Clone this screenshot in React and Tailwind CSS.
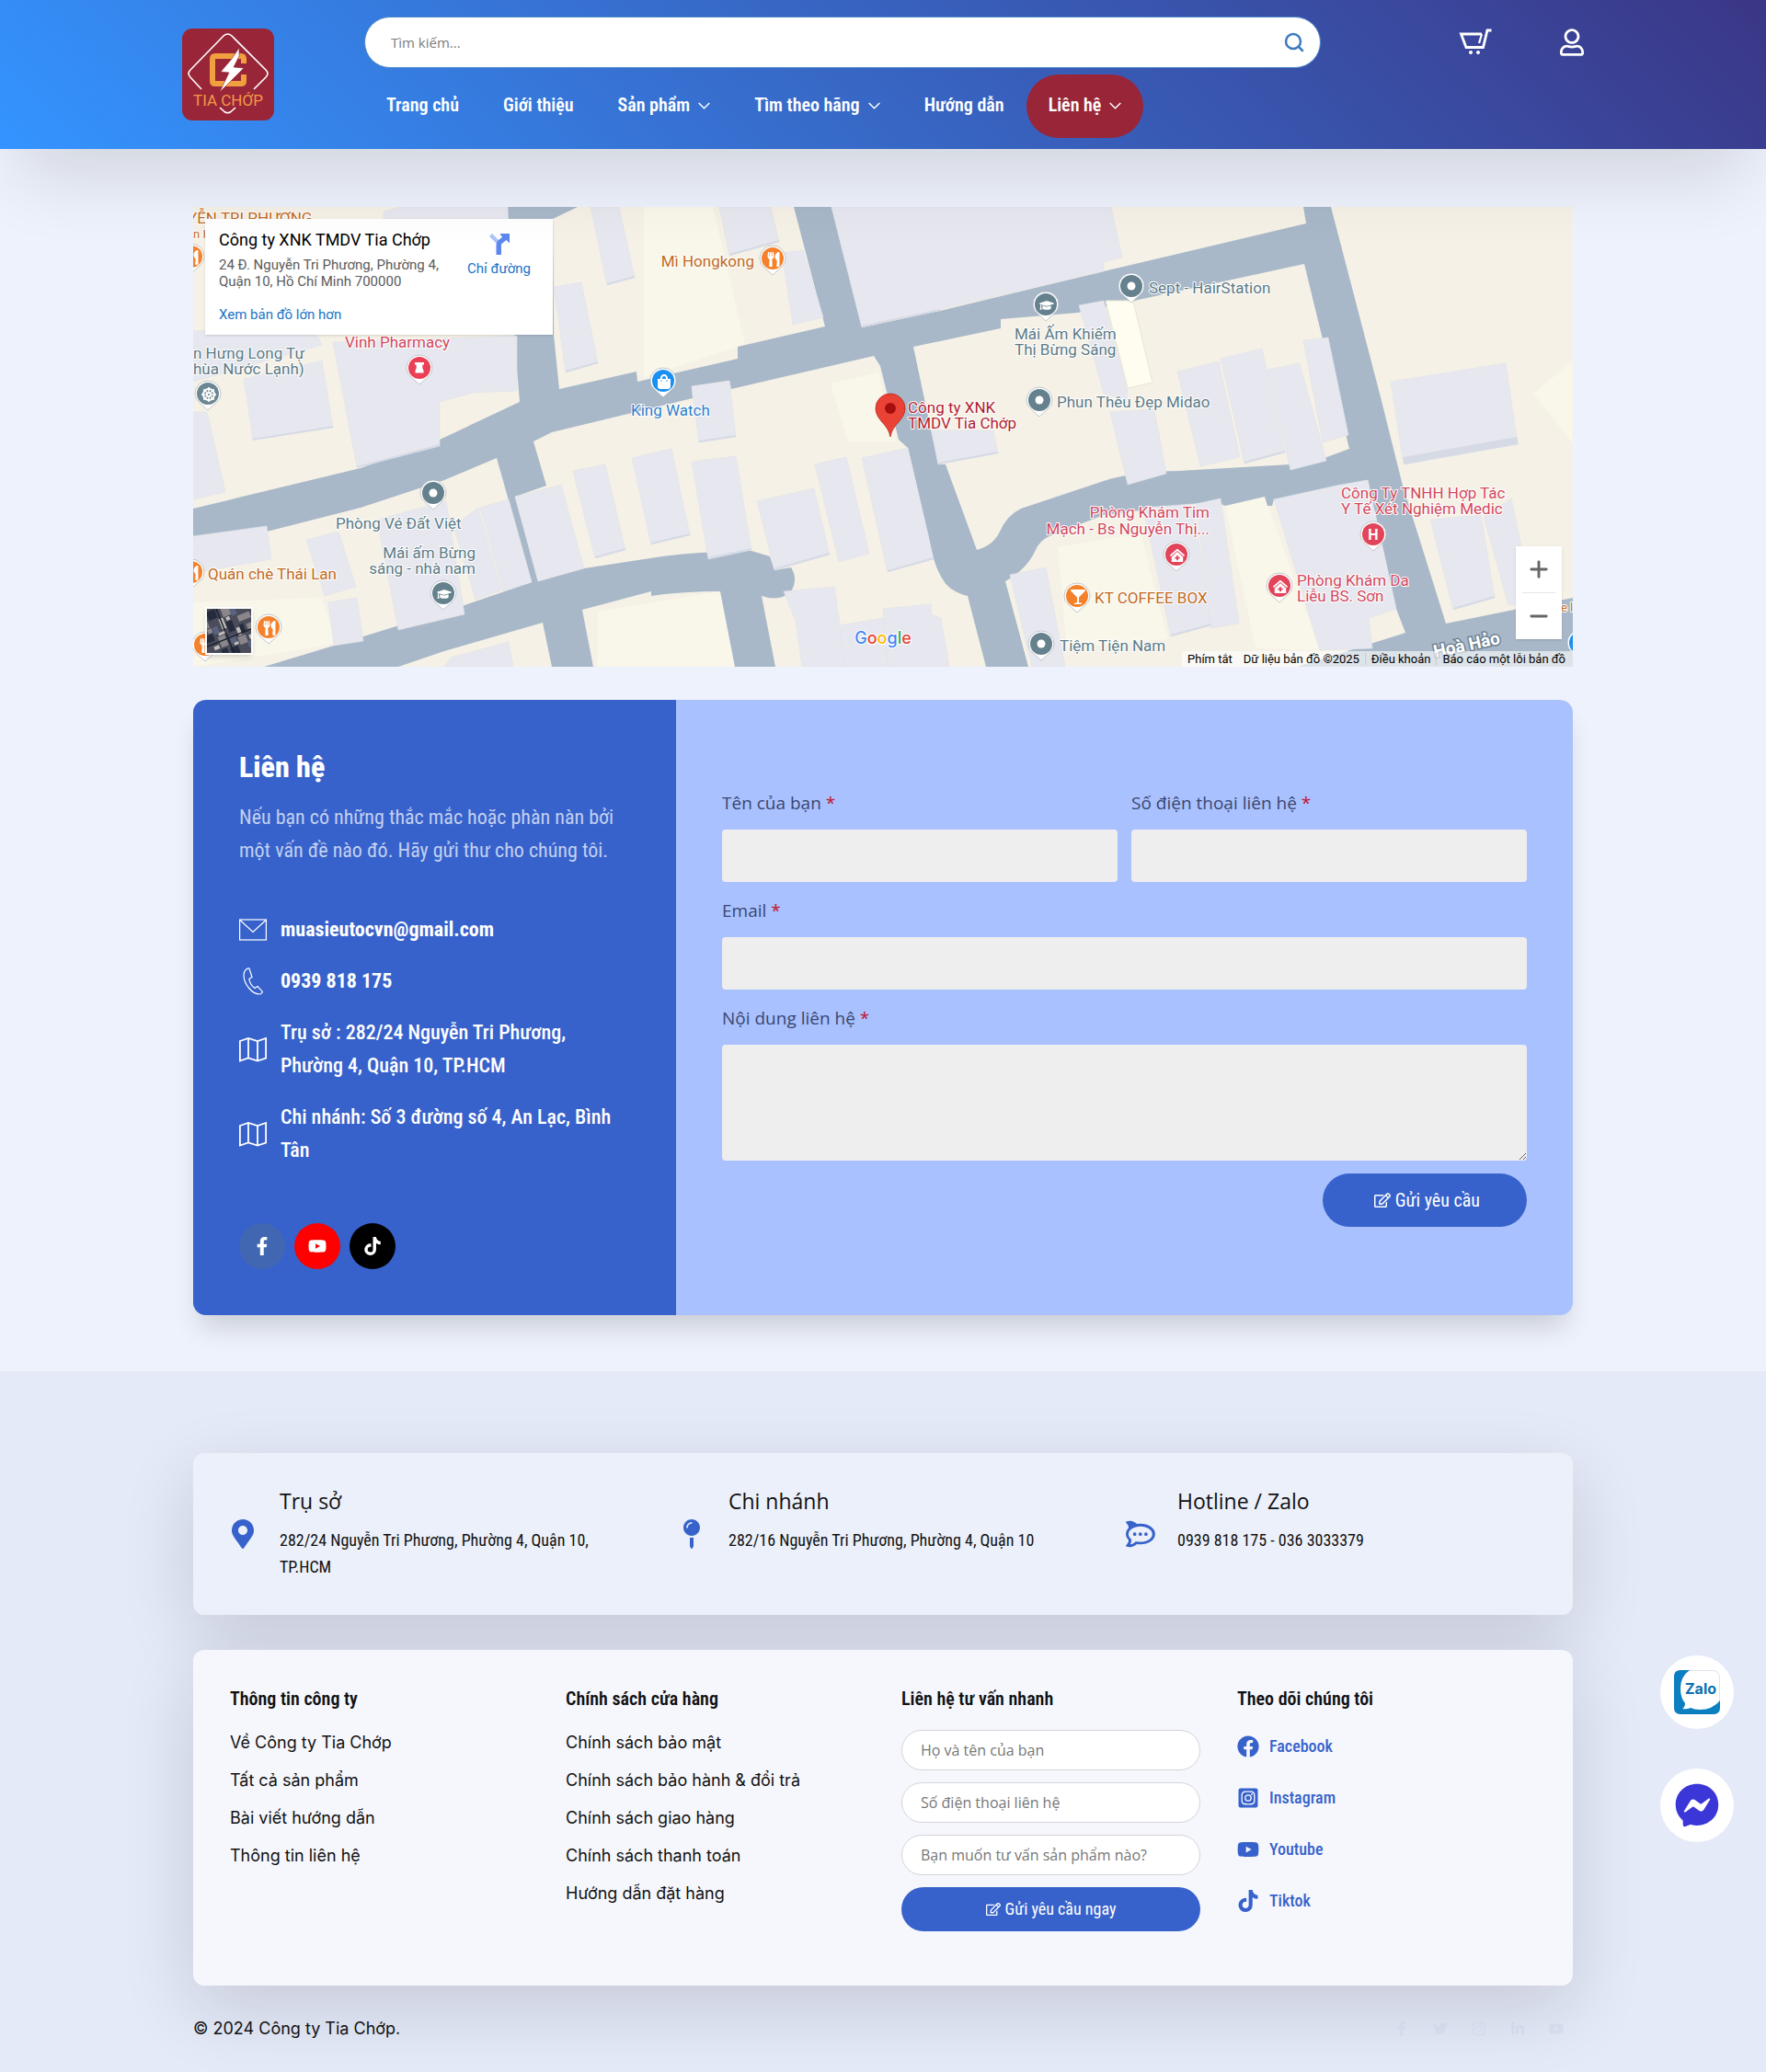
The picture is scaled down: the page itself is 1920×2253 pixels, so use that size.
import React from 'react';
import {
  FaRegUser, FaFacebookF, FaYoutube, FaTiktok, FaRegEdit, FaMapMarkerAlt, FaMapPin,
  FaRocketchat, FaFacebook, FaInstagramSquare, FaFacebookMessenger, FaTwitter,
  FaInstagram, FaLinkedinIn, FaUtensils, FaGraduationCap, FaShoppingBag, FaDharmachakra,
  FaGlassMartini, FaClinicMedical,
} from 'react-icons/fa';
import { Search, Plus, Minus } from 'lucide-react';

const navItems = [
  { label: 'Trang chủ' },
  { label: 'Giới thiệu' },
  { label: 'Sản phẩm', sub: true },
  { label: 'Tìm theo hãng', sub: true },
  { label: 'Hướng dẫn' },
  { label: 'Liên hệ', sub: true, active: true },
];

const buildings = [
  '152,147 352,140 352,200 305,202 268,212 268,260 178,283',
  '55,187 140,167 152,240 65,253',
  '0,135 90,130 135,140 140,150 0,190',
  '0,223 15,223 35,310 0,318',
  '207,5 225,0 342,0 342,13 207,13',
  '432,0 463,0 480,77 450,85',
  '392,87 422,82 440,170 405,180',
  '0,358 80,347 85,383 0,398',
  '123,362 158,353 177,413 143,423',
  '147,430 178,425 185,472 153,477',
  '283,347 310,327 335,417 307,427',
  '312,327 343,318 368,408 337,418',
  '350,315 400,302 425,393 375,407',
  '413,287 448,280 470,373 437,382',
  '477,273 520,263 540,357 498,367',
  '200,340 275,320 295,443 223,460',
  '280,490 343,473 348,500 273,500',
  '572,0 628,0 637,38 583,53',
  '640,50 663,47 685,120 652,128',
  '694,0 998,0 1010,55 990,60 990,70 727,131',
  '542,195 583,189 590,250 550,256',
  '542,277 590,271 607,373 560,383',
  '613,320 675,306 692,378 632,395',
  '676,280 710,272 735,377 702,386',
  '727,273 777,262 805,383 755,397',
  '642,418 697,413 710,500 662,500 655,450',
  '703,455 750,447 755,500 708,500',
  '750,437 802,432 803,443 813,447 822,500 755,500',
  '803,243 870,243 875,268 810,280',
  '963,107 990,102 1016,197 1015,210 990,203',
  '888,400 927,392 948,500 912,500',
  '997,223 1045,220 1058,290 1016,302',
  '1070,179 1115,168 1138,272 1095,282',
  '1117,165 1162,154 1187,267 1143,279',
  '1168,177 1203,170 1232,276 1193,286',
  '1207,145 1234,142 1256,248 1228,256',
  '1302,190 1427,170 1440,258 1316,280',
  '1175,318 1243,303 1277,297 1308,437 1278,447 1282,480 1225,482',
  '1033,327 1087,323 1107,455 1063,467',
  '1090,323 1117,317 1137,453 1107,458',
  '1345,340 1400,335 1415,425 1370,438',
  '1403,337 1433,317 1457,430 1430,433',
];

const slate = '#5b7a86';
const orange = '#c26a22';
const rose = '#d2475c';

const mapLabels = [
  { text: 'Mì Hongkong', x: 610, y: 65, color: orange, end: true },
  { text: 'King Watch', x: 476, y: 227, color: '#2f7ecb' },
  { text: 'Vinh Pharmacy', x: 165, y: 153, color: rose },
  { text: 'n Hưng Long Tự', x: 0, y: 165, color: slate },
  { text: 'hùa Nước Lạnh)', x: 0, y: 182, color: slate },
  { text: 'YỄN TRI PHƯƠNG', x: -6, y: 18, color: orange },
  { text: 'n H', x: 0, y: 34, color: orange, small: true },
  { text: 'Phòng Vé Đất Việt', x: 155, y: 350, color: slate },
  { text: 'Mái ấm Bừng', x: 307, y: 382, color: slate, end: true },
  { text: 'sáng - nhà nam', x: 307, y: 399, color: slate, end: true },
  { text: 'Quán chè Thái Lan', x: 16, y: 405, color: orange },
  { text: 'Mái Ấm Khiếm', x: 893, y: 144, color: slate },
  { text: 'Thị Bừng Sáng', x: 893, y: 161, color: slate },
  { text: 'Sept - HairStation', x: 1039, y: 94, color: slate },
  { text: 'Phun Thêu Đẹp Midao', x: 939, y: 218, color: slate },
  { text: 'Công ty XNK', x: 777, y: 224, color: '#b01c31' },
  { text: 'TMDV Tia Chớp', x: 777, y: 241, color: '#b01c31' },
  { text: 'Phòng Khám Tim', x: 1105, y: 338, color: rose, end: true },
  { text: 'Mạch - Bs Nguyễn Thị...', x: 1105, y: 356, color: rose, end: true },
  { text: 'Công Ty TNHH Hợp Tác', x: 1248, y: 317, color: rose },
  { text: 'Y Tế Xét Nghiệm Medic', x: 1248, y: 334, color: rose },
  { text: 'Phòng Khám Da', x: 1200, y: 412, color: rose },
  { text: 'Liễu BS. Sơn', x: 1200, y: 429, color: rose },
  { text: 'KT COFFEE BOX', x: 980, y: 431, color: orange },
  { text: 'Tiệm Tiện Nam', x: 942, y: 483, color: slate },
  { text: 'e l', x: 1487, y: 440, color: orange, small: true },
];

// Аптечная ступка
const Mortar = (props) => (
  <svg viewBox="0 0 14 14" {...props}>
    <path d="M2 1 H12 V3.500 H10.500 Q9.500 7 11.500 10 V12.500 H2.500 V10 Q4.500 7 3.500 3.500 H2 Z" fill="currentColor" />
  </svg>
);

const mapPins = [
  { x: 630, y: 56, color: '#f5822b', icon: FaUtensils },
  { x: 511, y: 189, color: '#1a90f0', icon: FaShoppingBag },
  { x: 246, y: 175, color: '#ea3f55', icon: Mortar },
  { x: 16, y: 203, color: '#6b8792', icon: FaDharmachakra },
  { x: 261, y: 311, color: '#64818d' },
  { x: 272, y: 420, color: '#64818d', icon: FaGraduationCap },
  { x: -2, y: 397, color: '#f5822b', icon: FaUtensils },
  { x: -2, y: 54, color: '#f5822b', icon: FaUtensils },
  { x: 82, y: 457, color: '#f5822b', icon: FaUtensils },
  { x: 13, y: 476, color: '#f5822b', icon: FaUtensils },
  { x: 927, y: 106, color: '#64818d', icon: FaGraduationCap },
  { x: 1020, y: 86, color: '#64818d' },
  { x: 920, y: 210, color: '#64818d' },
  { x: 1069, y: 378, color: '#e2445a', icon: FaClinicMedical },
  { x: 1283, y: 356, color: '#e2445a', letter: 'H' },
  { x: 1181, y: 412, color: '#e2445a', icon: FaClinicMedical },
  { x: 961, y: 423, color: '#f5822b', icon: FaGlassMartini },
  { x: 922, y: 475, color: '#64818d' },
  { x: 1508, y: 474, color: '#1a90f0' },
];

const offices = [
  { icon: FaMapMarkerAlt, title: 'Trụ sở', text: '282/24 Nguyễn Tri Phương, Phường 4, Quận 10, TP.HCM' },
  { icon: FaMapPin, title: 'Chi nhánh', text: '282/16 Nguyễn Tri Phương, Phường 4, Quận 10' },
  { icon: FaRocketchat, title: 'Hotline / Zalo', text: '0939 818 175 - 036 3033379' },
];

const companyLinks = ['Về Công ty Tia Chớp', 'Tất cả sản phẩm', 'Bài viết hướng dẫn', 'Thông tin liên hệ'];

const policyLinks = [
  'Chính sách bảo mật',
  'Chính sách bảo hành & đổi trả',
  'Chính sách giao hàng',
  'Chính sách thanh toán',
  'Hướng dẫn đặt hàng',
];

const quickFields = ['Họ và tên của bạn', 'Số điện thoại liên hệ', 'Bạn muốn tư vấn sản phẩm nào?'];

const socials = [
  { icon: FaFacebook, label: 'Facebook' },
  { icon: FaInstagramSquare, label: 'Instagram' },
  { icon: FaYoutube, label: 'Youtube' },
  { icon: FaTiktok, label: 'Tiktok' },
];

const Logo = () => (
  <svg viewBox="0 0 100 100" className="h-[100px] w-[100px]" fill="none">
    <rect width="100" height="100" rx="11" fill="#992638" />
    <path d="M21 66 L9 53 Q5 49 9 45 L45 8 Q49.500 4 54 8 L91 45 Q95 49 91 53 L78 66" stroke="#fff" strokeWidth="1.600" />
    <path d="M41 86 L46 90.500 Q49.500 93 53 90.500 L58 86" stroke="#fff" strokeWidth="1.600" />
    <path d="M67 38 V33 Q67 30 64 30 H36 Q33 30 33 33 V57 Q33 60 36 60 H64 Q67 60 67 57 V50" stroke="#f0a03e" strokeWidth="6" />
    <path d="M62 21 L54 33 L42 47 L51 48 L41 69 L67 43 L56 42 L62 30 Z" fill="#fff" stroke="#992638" strokeWidth="0.600" />
    <text x="50" y="84" textAnchor="middle" fontFamily="Roboto, sans-serif" fontSize="17" fill="#f39a45">TIA CHỚP</text>
  </svg>
);

const CartIcon = () => (
  <svg viewBox="0 0 36 30" className="h-[30px] w-9" fill="none" stroke="#fff" strokeWidth="2.800">
    <path d="M25 6 H2.500 L8 20.500 H26.500 L31 2 H35.500" />
    <path d="M25 6 L22 16" strokeWidth="2.200" />
    <circle cx="13" cy="26" r="1.600" fill="#fff" strokeWidth="1" />
    <circle cx="21" cy="26" r="1.600" fill="#fff" strokeWidth="1" />
  </svg>
);

const Chevron = () => (
  <svg viewBox="0 0 13 8" className="mt-0.5 h-2 w-[13px]" fill="none" stroke="currentColor" strokeWidth="1.500">
    <path d="M0.700 1 L6.500 6.800 L12.300 1" />
  </svg>
);

const MailIcon = () => (
  <svg viewBox="0 0 30 30" className="h-[30px] w-[30px] shrink-0" fill="none" stroke="#fff" strokeWidth="1.200">
    <rect x="0.600" y="4" width="28.800" height="22" />
    <path d="M1 4.500 L15 17.500 L29 4.500" />
  </svg>
);

const PhoneIcon = () => (
  <svg viewBox="0 0 30 30" className="h-[30px] w-[30px] shrink-0" fill="none" stroke="#fff" strokeWidth="1.200">
    <path d="M11 1 C8 0.500 5 4 5 8 C5 18 14 29 22 29 C24 29 25.500 27 25.300 26.200 L20 20.500 L17 22.500 C14 20.500 11.500 16 10.800 12.500 L14 10.500 Z" />
  </svg>
);

const MapIcon = () => (
  <svg viewBox="0 0 30 30" className="h-[30px] w-[30px] shrink-0" fill="none" stroke="#fff" strokeWidth="1.800">
    <path d="M0.900 6 L10 3 L20 6 L29.100 3 V24.500 L20 27.500 L10 24.500 L0.900 27.500 Z M10 3 V24.500 M20 6 V27.500" />
  </svg>
);

const ZaloIcon = () => (
  <svg viewBox="0 0 50 48" className="h-12 w-[50px]">
    <rect x="0.500" y="0.500" width="49" height="47" rx="7" fill="#fff" stroke="#dfe3ea" />
    <path d="M17 0 H7 Q0 0 0 7 V41 Q0 48 7 48 H43 Q50 48 50 41 V33 Q42 43 28 43 Q22 43 18 41 Q14 43 9 42 Q12 40 12 36 Q7 30 7 20 Q7 7 17 0 Z" fill="#0b7fc0" />
    <text x="29" y="26" textAnchor="middle" fontFamily="Inter, sans-serif" fontWeight="700" fontSize="16" fill="#0b6fb0">Zalo</text>
  </svg>
);

const Pin = ({ x, y, color, icon: Icon, letter }) => (
  <g>
    <path d={`M${x - 14} ${y} a14 14 0 1 1 28 0 q0 6 -5 10 l-9 8 l-9 -8 q-5 -4 -5 -10 z`} fill="#fff" stroke="#9aa3ad" strokeWidth="0.600" />
    <circle cx={x} cy={y} r="12" fill={color} />
    {!Icon && !letter && <circle cx={x} cy={y} r="4.500" fill="#fff" />}
    {Icon && <Icon x={x - 7} y={y - 7} width="14" height="14" color="#fff" />}
    {letter && (
      <text x={x} y={y + 6} textAnchor="middle" fontWeight="700" fontSize="16" fill="#fff">{letter}</text>
    )}
  </g>
);

const MapCanvas = () => (
  <svg viewBox="0 0 1500 500" preserveAspectRatio="xMidYMid slice" className="h-[500px] w-full" fontFamily="Roboto, sans-serif">
    <rect width="1500" height="500" fill="#f5f1e6" />
    {/* Светлые участки */}
    <g fill="#f9f6ea">
      <polygon points="490,0 565,0 600,150 490,185" />
      <polygon points="693,192 745,180 765,255 712,255" />
      <polygon points="0,430 140,425 155,475 0,500" />
      <polygon points="940,370 1030,355 1060,470 950,480" />
      <polygon points="1122,325 1165,315 1225,482 1155,480" />
      <polygon points="440,440 573,418 589,500 440,500" />
      <polygon points="1500,167 1457,203 1500,257" />
    </g>
    {/* Дороги */}
    <path
      fill="#a8b8c9"
      d="M0 328 L182 284 L268 253 L355 212 L349 139 L342 0 H418 L391 13 L392 139 L398 198 L482 179 L483 190 L592 165 V152 L687 130 L653 0 H694 L727 131 L812 113 L990 70 L1210 18 L1207 0 H1237 L1290 203 L1315 303 L1362 453 L1500 425 V500 H1200 L1318 463 L1308 437 L1277 297 L1243 303 V310 L1175 318 L1173 325 H1168 L1165 315 L1122 325 L1110 320 L990 335 L933 357 Q920 362 915 375 Q905 395 883 407 L908 500 H862 L842 423 Q822 418 815 405 Q805 390 800 360 L777 262 L767 253 L747 173 L740 162 L585 198 L583 189 L542 195 L543 208 L390 245 L370 255 L384 303 L350 315 L375 407 L425 393 L510 380 Q560 374 607 374 L627 380 L632 395 L650 392 Q658 405 650 418 Q638 430 618 423 L633 500 H589 L573 418 Q530 418 498 423 V418 L423 438 L435 500 H390 L380 452 L273 483 L223 500 H77 L153 477 L295 433 L368 408 L330 273 L273 297 L182 327 L80 353 L0 358 Z"
    />
    <path
      fill="#f5f1e6"
      d="M783 152 L878 132 V122 L962 115 L1023 102 L1208 62 L1257 263 L1230 273 L1193 280 L1072 287 Q1020 288 990 298 L900 328 Q885 335 877 353 Q870 368 852 373 L818 280 H810 Z"
    />
    {/* Дома */}
    <g fill="#e7e8ef" stroke="#e0e2ea" strokeWidth="0.600">
      {buildings.map((points) => <polygon key={points} points={points} />)}
    </g>
    <g stroke="#d6dae5" strokeWidth="2">
      <path d="M65 253 L152 239 M178 283 L268 259 M450 84 L480 76 M405 179 L440 169 M583 52 L637 37 M727 130 L812 112 M550 255 L590 249 M560 382 L607 372 M632 394 L692 377 M755 396 L805 382 M810 279 L875 267 M498 366 L540 356 M437 381 L470 372 M1143 278 L1187 266 M1063 466 L1107 454 M1370 437 L1415 424" />
      <path d="M1316 276 L1440 254" strokeWidth="8" />
    </g>
    <polygon points="992,102 1022,102 1043,191 1016,197" fill="#fffdf0" stroke="#ebe6d4" />
    {mapPins.map((pin) => <Pin key={`${pin.x}-${pin.y}`} {...pin} />)}
    <g stroke="#fff" strokeWidth="2" strokeLinejoin="round" paintOrder="stroke">
      {mapLabels.map((item) => (
        <text key={item.text} x={item.x} y={item.y} fill={item.color} fontSize={item.small ? 13 : 17} textAnchor={item.end ? 'end' : 'start'}>{item.text}</text>
      ))}
    </g>
    <text x="1350" y="490" transform="rotate(-12 1350 490)" fontSize="19" fontWeight="700" fill="#fff" stroke="#6f8091" strokeWidth="3" paintOrder="stroke">Hoà Hảo</text>
    <path d="M758 250 C756 236 742 232 742 219 a16 16 0 1 1 32 0 C774 232 760 236 758 250 Z" fill="#ea4335" stroke="#b3261e" strokeWidth="0.800" />
    <circle cx="758" cy="219" r="6" fill="#a50e0e" />
    <text x="750" y="475" textAnchor="middle" fontFamily="Inter, sans-serif" fontWeight="500" fontSize="18" stroke="#fff" strokeWidth="2" paintOrder="stroke">
      <tspan fill="#4285f4">G</tspan><tspan fill="#ea4335">o</tspan><tspan fill="#fbbc04">o</tspan><tspan fill="#4285f4">g</tspan><tspan fill="#34a853">l</tspan><tspan fill="#ea4335">e</tspan>
    </text>
  </svg>
);

const Satellite = () => (
  <svg viewBox="0 0 48 48" className="h-12 w-12">
    <rect width="48" height="48" fill="#4a4c5a" />
    <g transform="rotate(-22 24 24)">
      <path d="M-8 4h14v9h-14z M24 -6h9v14h-9z M38 12h14v7h-14z M10 26h8v12h-8z M30 34h9v9h-9z M2 14h5v5h-5z M44 24h6v8h-6z" fill="#8a868c" />
      <path d="M8 -4h10v10h-10z M-6 20h12v8h-12z M24 14h7v12h-7z M18 42h9v9h-9z M36 22h5v9h-5z M8 40h7v9h-7z" fill="#262c3d" />
      <path d="M18 8h5v12h-5z M32 24h4v9h-4z M2 34h6v4h-6z M42 36h8v5h-8z M26 9h4v4h-4z M12 22h9v3h-9z M24 38h5v3h-5z" fill="#c2bdb9" />
      <path d="M33 2h6v8h-6z M8 14h6v8h-6z M22 30h6v8h-6z M38 42h7v8h-7z" fill="#5a6480" />
      <path d="M-10 31h70 M20 -10v70" stroke="#1b202c" strokeWidth="1.500" />
    </g>
  </svg>
);

const Header = () => {
  return (
    <header className="relative z-10 bg-[linear-gradient(45deg,#3494ff,#3b3686)] px-4 pt-[18px] pb-3 shadow-[0_50px_80px_-20px_rgba(0,0,0,0.12)]">
      <div className="mx-auto flex max-w-[1524px] items-start">
        <a href="#" aria-label="Tia Chớp" className="mt-[13px]"><Logo /></a>
        <div className="ml-[98px] flex-1">
          <form className="flex h-14 items-center rounded-full border border-[#4b86c4] bg-white pr-4 pl-7">
            <input type="search" aria-label="Tìm kiếm" placeholder="Tìm kiếm..." className="flex-1 font-['Open_Sans',sans-serif] text-[15px] outline-none placeholder:text-[#7d7d7d]" />
            <button type="button" aria-label="Tìm" className="text-[#3b7bbf]"><Search size={24} strokeWidth={2.500} /></button>
          </form>
          <nav className="mt-[7px] flex">
            {navItems.map((item) => (
              <a key={item.label} href="#" className={`flex h-[69px] items-center gap-[9px] rounded-full px-6 pb-1 text-xl font-semibold text-white ${item.active ? 'bg-[#992638]' : ''}`}>
                {item.label}
                {item.sub && <Chevron />}
              </a>
            ))}
          </nav>
        </div>
        <div className="ml-[150px] flex h-14 items-center gap-[74px] text-white">
          <a href="#" aria-label="Giỏ hàng"><CartIcon /></a>
          <a href="#" aria-label="Tài khoản"><FaRegUser className="h-[30px] w-[26px]" /></a>
        </div>
      </div>
    </header>
  );
};

const MapBlock = () => (
  <section className="relative h-[500px] overflow-hidden font-[Roboto,sans-serif]">
    <MapCanvas />
    <div className="absolute top-[13px] left-[13px] flex h-[126px] w-[378px] justify-between bg-white pt-[11px] pr-6 pl-[15px] shadow">
      <div>
        <h2 className="text-lg leading-6 text-black">Công ty XNK TMDV Tia Chớp</h2>
        <p className="mt-[6px] text-[15px] leading-[18px] text-[#5b5b5b]">24 Đ. Nguyễn Tri Phương, Phường 4,<br />Quận 10, Hồ Chí Minh 700000</p>
        <a href="#" className="mt-[18px] block text-[15px] leading-[18px] text-[#1a73c8]">Xem bản đồ lớn hơn</a>
      </div>
      <a href="#" className="flex flex-col items-center gap-1 text-[15px] text-[#1a73c8]">
        <svg viewBox="0 0 24 24" className="mt-1 h-6 w-6">
          <path d="M1 4 L4 1 L12 9 L10 13 Z" fill="#a9c4f8" />
          <path d="M8.500 24 V13 Q8.500 10 11 8 L15 5 L12.500 1 H23 V11.500 L19.500 8 L14 12.500 V24 Z" fill="#5b87ee" />
        </svg>
        Chỉ đường
      </a>
    </div>
    <div className="absolute bottom-[13px] left-[13px] border-2 border-white shadow-md"><Satellite /></div>
    <div className="absolute right-3 bottom-[30px] flex w-[50px] flex-col items-center bg-white text-[#666] shadow">
      <button type="button" aria-label="Phóng to" className="flex h-[50px] items-center"><Plus size={28} strokeWidth={2.500} /></button>
      <div className="h-px w-9 bg-[#e6e6e6]" />
      <button type="button" aria-label="Thu nhỏ" className="flex h-[50px] items-center"><Minus size={28} strokeWidth={2.500} /></button>
    </div>
    <div className="absolute right-0 bottom-0 flex h-[17px] items-center bg-white/60 pr-2 text-[13px] leading-none text-black">
      <span className="px-[6px]">Phím tắt</span>
      <span className="px-[6px]">Dữ liệu bản đồ ©2025</span>
      <a href="#" className="border-l border-[#c9ccd1] px-[6px]">Điều khoản</a>
      <a href="#" className="border-l border-[#c9ccd1] pl-[6px]">Báo cáo một lỗi bản đồ</a>
    </div>
  </section>
);

const Label = ({ htmlFor, children }) => (
  <label htmlFor={htmlFor} className="mb-[14px] block font-['Open_Sans',sans-serif] text-[19px] leading-[30px] text-[#3a4670]">
    {children} <span className="text-[#c4122f]">*</span>
  </label>
);

const ContactBlock = () => {
  return (
    <section className="mt-9 flex overflow-hidden rounded-[14px] bg-[#a9c1fe] shadow-[0_20px_30px_-8px_rgba(0,0,0,0.16)]">
      <div className="w-[35%] bg-[#3762cb] p-[50px] text-[22px] leading-9 text-white">
        <h1 className="text-[32px] leading-[46px] font-extrabold">Liên hệ</h1>
        <p className="mt-[14px] text-[#c3d0f0]">Nếu bạn có những thắc mắc hoặc phàn nàn bởi một vấn đề nào đó. Hãy gửi thư cho chúng tôi.</p>
        <div className="mt-[50px] flex flex-col gap-5">
          <a href="#" className="flex items-center gap-[15px] font-bold"><MailIcon />muasieutocvn@gmail.com</a>
          <a href="#" className="flex items-center gap-[15px] font-bold"><PhoneIcon />0939 818 175</a>
          <p className="flex items-center gap-[15px] font-medium"><MapIcon />Trụ sở : 282/24 Nguyễn Tri Phương, Phường 4, Quận 10, TP.HCM</p>
          <p className="flex items-center gap-[15px] font-medium"><MapIcon />Chi nhánh: Số 3 đường số 4, An Lạc, Bình Tân</p>
        </div>
        <div className="mt-[61px] flex gap-[10px]">
          <a href="#" aria-label="Facebook" className="flex h-[50px] w-[50px] items-center justify-center rounded-full bg-[#4267b2]"><FaFacebookF size={20} /></a>
          <a href="#" aria-label="Youtube" className="flex h-[50px] w-[50px] items-center justify-center rounded-full bg-[#fe0000]"><FaYoutube size={20} /></a>
          <a href="#" aria-label="Tiktok" className="flex h-[50px] w-[50px] items-center justify-center rounded-full bg-black"><FaTiktok size={20} /></a>
        </div>
      </div>
      <form className="flex flex-1 flex-col justify-center px-[50px]">
        <div className="grid grid-cols-2 gap-[15px]">
          <div>
            <Label htmlFor="name">Tên của bạn</Label>
            <input id="name" type="text" className="h-[57px] w-full rounded bg-[#eee] px-4" />
          </div>
          <div>
            <Label htmlFor="phone">Số điện thoại liên hệ</Label>
            <input id="phone" type="tel" className="h-[57px] w-full rounded bg-[#eee] px-4" />
          </div>
        </div>
        <div className="mt-4">
          <Label htmlFor="email">Email</Label>
          <input id="email" type="email" className="h-[57px] w-full rounded bg-[#eee] px-4" />
        </div>
        <div className="mt-4">
          <Label htmlFor="message">Nội dung liên hệ</Label>
          <textarea id="message" className="block h-[126px] w-full rounded bg-[#eee] px-4 py-3" />
        </div>
        <button type="button" className="mt-[14px] flex h-[58px] items-center gap-[5px] self-end rounded-full bg-[#3762cb] pr-[51px] pl-[56px] text-xl text-white">
          <FaRegEdit size={18} />Gửi yêu cầu
        </button>
      </form>
    </section>
  );
};

const LinkColumn = ({ title, links }) => (
  <div>
    <h3 className="text-xl leading-[30px] font-semibold">{title}</h3>
    <ul className="mt-3">
      {links.map((link) => (
        <li key={link} className="font-[Inter,sans-serif] text-lg leading-[41px]"><a href="#">{link}</a></li>
      ))}
    </ul>
  </div>
);

const Footer = () => {
  return (
    <footer className="overflow-hidden bg-[#e4eaf8] px-4 pt-[89px] pb-[30px] text-[#111]">
      <div className="mx-auto max-w-[1500px]">
        <div className="grid grid-cols-3 rounded-xl bg-[#ecf0fa] px-[18px] pt-8 pb-[38px] shadow-[0_25px_80px_rgba(20,0,30,0.14)]">
          {offices.map(({ icon: Icon, title, text }) => (
            <div key={title} className="flex gap-6 px-5">
              <Icon size={32} className="mt-10 shrink-0 text-[#3762cb]" />
              <div>
                <h3 className="font-['Open_Sans',sans-serif] text-[23px] leading-10">{title}</h3>
                <p className="pt-2 text-lg leading-[29px]">{text}</p>
              </div>
            </div>
          ))}
        </div>

        <div className="mt-[38px] grid min-h-[365px] grid-cols-4 gap-10 rounded-xl bg-[#f6f7fd] px-10 pt-[38px] shadow-[0_25px_80px_rgba(20,0,30,0.14)]">
          <LinkColumn title="Thông tin công ty" links={companyLinks} />
          <LinkColumn title="Chính sách cửa hàng" links={policyLinks} />
          <form>
            <h3 className="text-xl leading-[30px] font-semibold">Liên hệ tư vấn nhanh</h3>
            <div className="mt-[19px] flex flex-col gap-[13px]">
              {quickFields.map((field) => (
                <input key={field} type="text" aria-label={field} placeholder={field} className="h-11 rounded-full border border-[#d3d5dc] bg-white px-5 font-['Open_Sans',sans-serif] text-base placeholder:text-[#777]" />
              ))}
              <button type="button" className="flex h-12 items-center justify-center gap-[5px] rounded-full bg-[#3762cb] text-lg text-white">
                <FaRegEdit size={16} />Gửi yêu cầu ngay
              </button>
            </div>
          </form>
          <div>
            <h3 className="text-xl leading-[30px] font-semibold">Theo dõi chúng tôi</h3>
            <div className="mt-[19px] flex flex-col gap-5">
              {socials.map(({ icon: Icon, label }) => (
                <a key={label} href="#" className="flex h-9 items-center gap-[11px] text-lg font-medium text-[#3762cb]"><Icon size={24} />{label}</a>
              ))}
            </div>
          </div>
        </div>

        <div className="mt-[30px] flex h-[34px] items-center justify-between">
          <p className="font-[Inter,sans-serif] text-lg">© 2024 Công ty Tia Chớp.</p>
          <div className="flex gap-[26px] pr-[10px] text-[#c9d0e2] opacity-40">
            <FaFacebookF size={16} />
            <FaTwitter size={16} />
            <FaInstagram size={16} />
            <FaLinkedinIn size={16} />
            <FaYoutube size={16} />
          </div>
        </div>
      </div>
    </footer>
  );
};

const App = () => {
  return (
    <div className="bg-[#eef2fc] font-['Roboto_Condensed',Roboto,sans-serif]">
      <Header />
      <main className="mx-auto max-w-[1500px] pt-[63px] pb-[61px]">
        <MapBlock />
        <ContactBlock />
      </main>
      <Footer />
      <div className="fixed right-[35px] bottom-[250px] z-20 flex flex-col gap-[43px]">
        <a href="#" aria-label="Zalo" className="flex h-20 w-20 items-center justify-center rounded-full bg-white"><ZaloIcon /></a>
        <a href="#" aria-label="Messenger" className="flex h-20 w-20 items-center justify-center rounded-full bg-white text-[#3b36d8]"><FaFacebookMessenger size={48} /></a>
      </div>
    </div>
  );
};

export default App;
